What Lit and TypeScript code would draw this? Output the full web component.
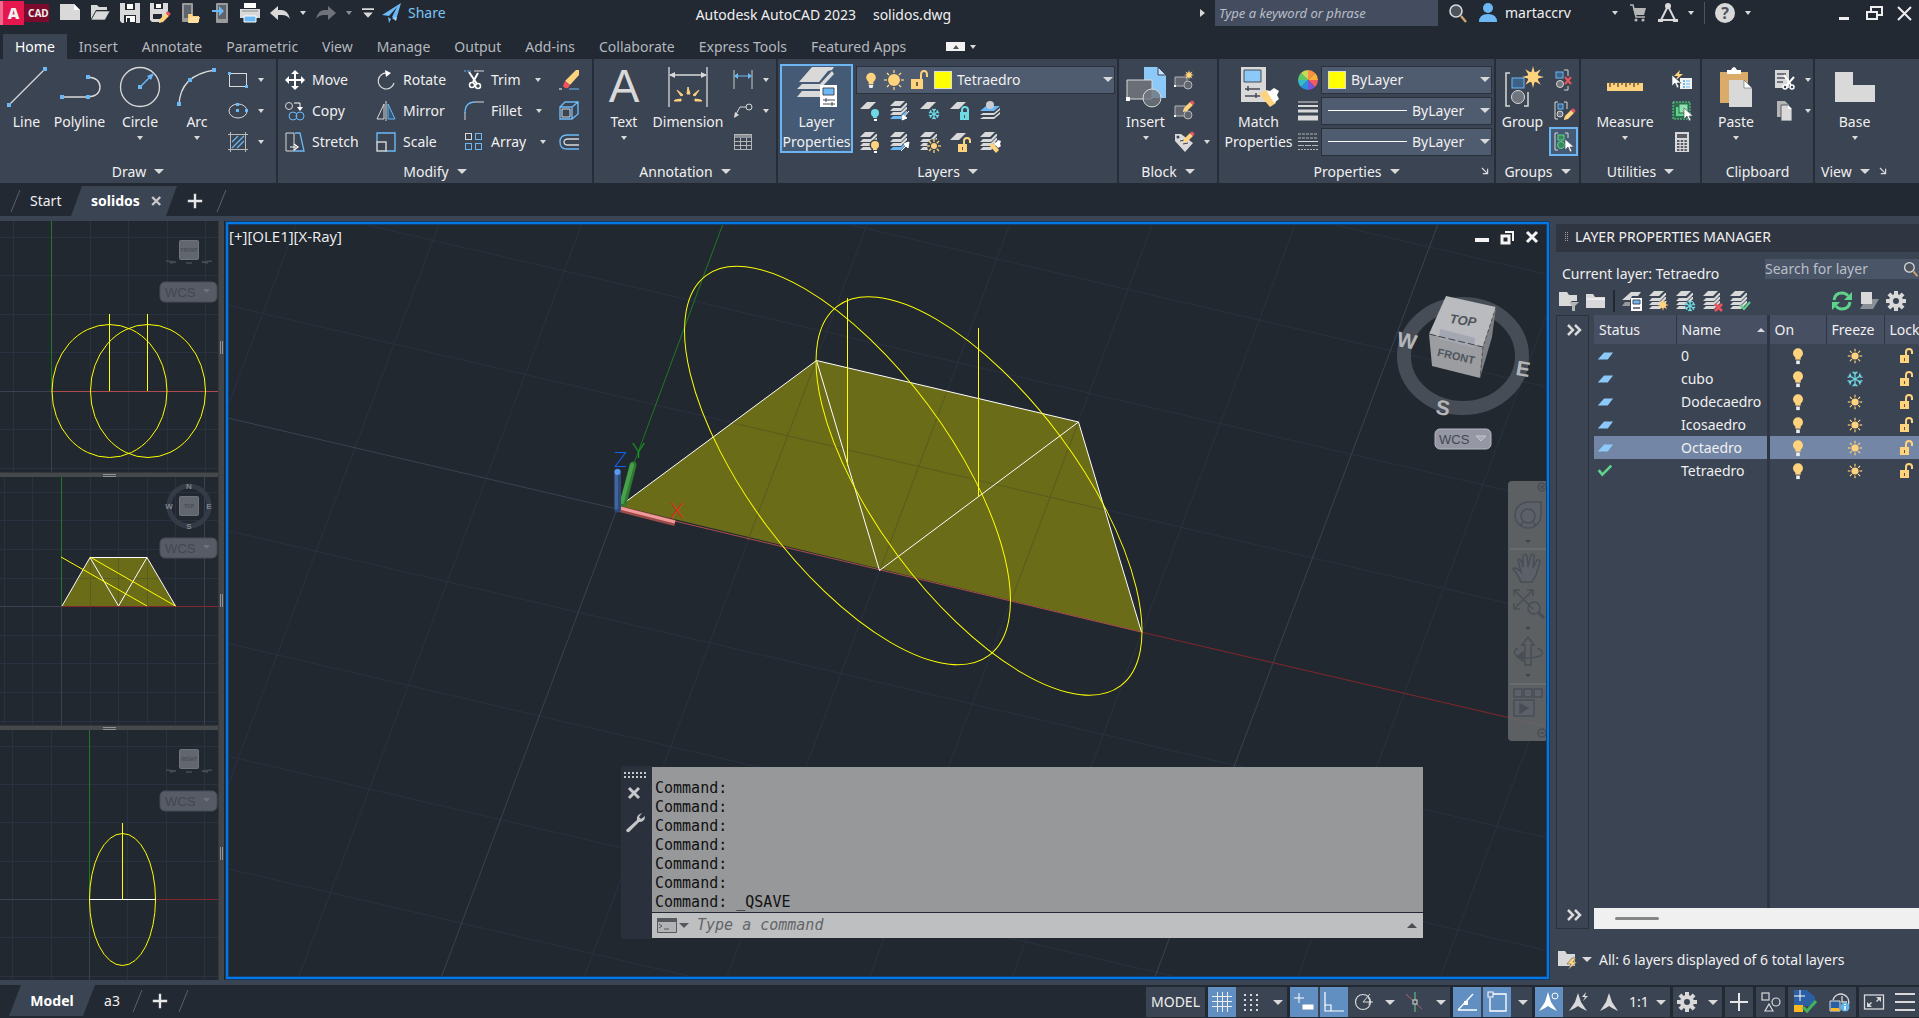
import { LitElement, html, svg, css, nothing, SVGTemplateResult, TemplateResult } from "lit";
import { customElement, state } from "lit/decorators.js";
import { classMap } from "lit/directives/class-map.js";

const L = "#d9d9d9";
const B = "#6cb8f5";
const Y = "#ffd27d";
const T = "#6fd9e4";
const G = "#5fd38a";
const R = "#f0535c";

/* One slanted sheet of a layer stack; x, y is the left end of its lower edge. */
const sheet = (x: number, y: number, w: number, h: number, fill = L) =>
  svg`<path d="M${x} ${y}l${h} ${-h}h${w}l${-h} ${h}z" fill=${fill}/>`;
const stack = (last = L) => svg`
  ${sheet(0, 5, 10, 5)}
  <path d="M0 10l3-3h8l5-5h1v2l-6 6z" fill=${L}/>
  <path d="M0 14l3-3h8l5-5h1v2l-6 6z" fill=${L}/>
  <path d="M0 18l3-3h8l5-5h1v2l-6 6z" fill=${last}/>`;
const bulb = (x: number, y: number, fill = Y) => svg`
  <circle cx=${x} cy=${y} r="4" fill=${fill}/><path d="M${x - 2} ${y + 3}h4v2h-4z" fill=${fill}/>
  <path d="M${x - 1} ${y + 6}h3v2h-3z" fill="#fff"/>`;
const sun = (x: number, y: number, r: number) => svg`
  <circle cx=${x} cy=${y} r=${r} fill=${Y}/>
  ${[0, 45, 90, 135, 180, 225, 270, 315].map(
    (a) => svg`<path d="M0 ${-r - 1}v-3" stroke=${Y} stroke-width="1.3" transform="translate(${x} ${y}) rotate(${a})"/>`
  )}`;
const flake = (x: number, y: number, r: number) => svg`${[0, 60, 120, 180, 240, 300].map(
  (a) => svg`<path d="M0 0v${-r}M${-r / 3} ${-r}l${r / 3} ${r / 3}l${r / 3} ${-r / 3}" fill="none" stroke=${T} stroke-width="1.4" transform="translate(${x} ${y}) rotate(${a})"/>`
)}`;
const lock = (x: number, y: number, fill = Y, open = true) => svg`
  <path d="M${x} ${y}h9v8h-9z" fill=${fill}/><path d="M${x + 4} ${y + 3}h1v3h-1z" fill="#5b5440"/>
  <path d=${open ? `M${x + 6} ${y}v-3q0-3 3-3t3 3v2` : `M${x + 2} ${y}v-2q0-3 3-3t3 3v2`} fill="none" stroke=${fill} stroke-width="2"/>`;
const pencil = (x: number, y: number) => svg`
  <g transform="translate(${x} ${y})"><path d="M0 9l1-3L7 0l3 3-6 6-4 1z" fill=${Y}/><path d="M7 0l1-1q1-1 2 0l1 1q1 1 0 2l-1 1z" fill=${R}/></g>`;
const brush = (x: number, y: number) => svg`
  <g transform="translate(${x} ${y})"><path d="M0 2l4-2 6 7-3 3z" fill=${Y}/><path d="M4-1l3 1 2-3 3 1-1 3 1 2-3 2z" fill="#fff"/></g>`;
const burst = (x: number, y: number, r: number) => svg`
  <g transform="translate(${x} ${y})">${[0, 45, 90, 135].map(
    (a) => svg`<path d="M0 ${-r}L${r / 4} 0L0 ${r}L${-r / 4} 0z" fill=${Y} transform="rotate(${a})"/>`
  )}<circle r=${r / 2} fill=${Y}/></g>`;
const cursor = (x: number, y: number) => svg`
  <path d="M${x} ${y}v11l3-3 2 5 2-1-2-4h4z" fill="#fff" stroke="#3b4453" stroke-width=".6"/>`;
const node = (x: number, y: number) => svg`<rect x=${x - 2} y=${y - 2} width="4" height="4" fill=${B}/>`;

const shapes: Record<string, () => SVGTemplateResult> = {
  /* quick access */
  newFile: () => svg`<path d="M0 1h14l6 6v10H0z" fill=${L}/><path d="M14 1v6h6z" fill="#fff"/>`,
  open: () => svg`<path d="M1 16V2h6l2 2h8v3H6z" fill=${L}/><path d="M6 8h14l-5 9H1z" fill=${L} stroke="#222933" stroke-width=".6"/>`,
  save: () => svg`<path d="M0 0h20v20H2l-2-2z" fill=${L}/><path d="M5 0h10v7H5z" fill="#222933"/><path d="M7 1h6v5H7z" fill="#fff"/><path d="M4 12h12v8H4z" fill="#222933"/><path d="M6 13h9v6H6z" fill="#fff"/><path d="M7 15h3v4H7z" fill="#222933"/>`,
  saveAs: () => svg`<path d="M0 0h18v8l-8 11H2l-2-2z" fill=${L}/><path d="M4 0h9v6H4z" fill="#222933"/><path d="M6 1h5v4H6z" fill="#fff"/><path d="M3 11h9v5H3z" fill="#222933"/>${pencil(9, 10)}`,
  openMobile: () => svg`<rect x="2" y="0" width="11" height="19" rx="1" fill="#9b9b9b"/><path d="M4 2h7v13H4z" fill="#5e646e"/><path d="M8 11h4l1 2h6v6H8z" fill=${Y}/><path d="M10 14h10l-2 6H8z" fill="#ffe0a0"/>`,
  saveMobile: () => svg`<rect x="6" y="0" width="12" height="20" rx="1" fill="#9b9b9b"/><path d="M8 2h8v14H8z" fill="#5e646e"/><path d="M2 7h7V3l5 5-5 5V9H2z" fill=${B}/>`,
  print: () => svg`<path d="M4 0h12v5H4z" fill="#fff"/><path d="M0 6h20v9H0z" fill=${L}/><path d="M2 8h16" stroke="#8a8a8a"/><path d="M4 13h12v6H4z" fill=${B} stroke="#fff"/>`,
  undo: () => svg`<path d="M0 10l8-7v4h3q7 0 9 9-3-4-8-4H8v5z" fill=${L}/>`,
  redo: () => svg`<path d="M20 10l-8-7v4H9q-7 0-9 9 3-4 8-4h4v5z" fill="#6f747c"/>`,
  qatMenu: () => svg`<path d="M0 2h20v3H0zM2 9h16l-8 9z" fill=${L}/>`,
  share: () => svg`<path d="M0 12L19 0l-5 17-4-3 5-10-8 9z" fill=${B}/><path d="M6 14l3 2-2 4z" fill=${B}/><path d="M10 15l4 3 1-4z" fill="#9fd0f8"/>`,
  /* info centre */
  search: () => svg`<circle cx="8" cy="8" r="6" fill="#4d535d" stroke=${L} stroke-width="1.6"/><path d="M13 13l5 6" stroke="#cfa370" stroke-width="2.4"/>`,
  user: () => svg`<circle cx="10" cy="5" r="5" fill=${B}/><path d="M1 19q0-8 9-8t9 8z" fill=${B}/>`,
  cart: () => svg`<path d="M2 2h3l3 12h9" fill="none" stroke="#b5b5b5" stroke-width="1.5"/><path d="M5 5h13l-2 7H7z" fill="#b5b5b5"/><circle cx="8" cy="17" r="1.6" fill="#b5b5b5"/><circle cx="15" cy="17" r="1.6" fill="#b5b5b5"/>`,
  autodesk: () => svg`<path d="M10 3L3 17h14z" fill="none" stroke=${L} stroke-width="2"/><circle cx="10" cy="3" r="3" fill=${L}/><path d="M0 16h5v3H0zM15 16h5v3h-5z" fill=${L}/>`,
  help: () => svg`<circle cx="10" cy="10" r="10" fill=${L}/><text x="10" y="16" text-anchor="middle" font-size="16" font-weight="700" fill="#4d535d">?</text>`,
  winMin: () => svg`<path d="M5 14h10v3H5z" fill="#eee"/>`,
  winMax: () => svg`<path d="M7 8V4h11v8h-4" fill="none" stroke="#eee" stroke-width="2"/><rect x="3" y="9" width="10" height="7" fill="none" stroke="#eee" stroke-width="2"/>`,
  winClose: () => svg`<path d="M4 4l13 13M17 4L4 17" stroke="#eee" stroke-width="2"/>`,
  viewMin: () => svg`<path d="M3 11h14v4H3z" fill="#f4f4f4"/>`,
  viewMax: () => svg`<path d="M8 5h8v9" fill="none" stroke="#f4f4f4" stroke-width="2"/><rect x="5" y="9" width="7" height="7" fill="none" stroke="#f4f4f4" stroke-width="3"/>`,
  viewClose: () => svg`<path d="M5 5l10 10M15 5L5 15" stroke="#f4f4f4" stroke-width="3"/>`,
  /* draw */
  line: () => svg`<path d="M2 38L38 2" stroke=${L} stroke-width="1.3"/>${node(2, 38)}${node(38, 2)}`,
  polyline: () => svg`<path d="M2 30h26q12-1 12-10t-12-10" fill="none" stroke=${L} stroke-width="1.4"/>${node(2, 30)}${node(28, 30)}${node(28, 10)}`,
  circle: () => svg`<circle cx="20" cy="20" r="19.5" fill="none" stroke=${L} stroke-width="1.3"/><path d="M20 20L32 8" stroke=${B} stroke-width="1.4"/><path d="M34 6l-7 3 4 4z" fill=${B}/>${node(20, 20)}`,
  arc: () => svg`<path d="M2 38Q3 8 38 3" fill="none" stroke=${L} stroke-width="1.3"/>${node(2, 37)}${node(13, 13)}${node(37, 3)}`,
  rect: () => svg`<rect x="1.5" y="3.5" width="17" height="13" fill="none" stroke=${L}/><path d="M0 2h3v3H0zM17 15h3v3h-3z" fill=${B}/>`,
  ellipse: () => svg`<ellipse cx="10" cy="10" rx="9" ry="7" fill="none" stroke=${L}/><path d="M8 8h3v3H8zM8 2h3v3H8zM17 8h3v3h-3z" fill=${B}/>`,
  hatch: () => svg`<path d="M0 2.5h20M0 17.5h20M2.5 0v20M17.5 0v20" stroke="#b9b9b9"/><path d="M4 10l6-6M4 16L16 4M9 16l7-7" stroke=${B} stroke-width="1.3"/>`,
  /* modify */
  move: () => svg`<path d="M10 0l4 4h-3v5h5V6l4 4-4 4v-3h-5v5h3l-4 4-4-4h3v-5H4v3l-4-4 4-4v3h5V4H6z" fill="#fff"/>`,
  copy: () => svg`<circle cx="4" cy="5" r="3.5" fill="none" stroke=${L}/><path d="M9 2h6v5" fill="none" stroke="#fff"/><path d="M12 6h6l-3 4z" fill="#fff"/><circle cx="8" cy="15" r="4" fill="none" stroke=${B}/><circle cx="15" cy="15" r="4" fill="none" stroke=${B}/>`,
  stretch: () => svg`<path d="M1 1h8v18H1z" fill="none" stroke=${L}/><path d="M10 1h5l4 18H9" fill="none" stroke=${B} stroke-width="1.3"/><path d="M5 15h6M9 12l4 3-4 3" fill="none" stroke="#fff" stroke-width="1.2"/>`,
  rotate: () => svg`<path d="M11 3a8 8 0 1 0 7 10" fill="none" stroke=${L} stroke-width="1.2"/><path d="M9 0l6 3-5 4z" fill="#fff"/>`,
  mirror: () => svg`<path d="M8 3v15H1z" fill="none" stroke=${L}/><path d="M12 3v15h7z" fill="#32597c" stroke=${B}/><path d="M10 0v20" stroke=${L}/>`,
  scale: () => svg`<path d="M1 10V1h18v18H9" fill="none" stroke=${B} stroke-width="1.4"/><rect x="1" y="10" width="9" height="9" fill="none" stroke=${L} stroke-width="1.4"/>`,
  trim: () => svg`<path d="M0 1h7" stroke=${B} stroke-dasharray="2 1"/><path d="M10 1h10" stroke=${L}/><path d="M5 2l8 12M14 3L9 12" stroke="#fff" stroke-width="2"/><circle cx="8" cy="15" r="2.5" fill="none" stroke="#fff" stroke-width="1.5"/><circle cx="14" cy="16" r="2.5" fill="none" stroke="#fff" stroke-width="1.5"/>`,
  fillet: () => svg`<path d="M1 19v-8" stroke=${L}/><path d="M1 12Q1 1 11 1" fill="none" stroke=${B} stroke-width="1.3"/><path d="M11 1h9" stroke=${L}/>`,
  array: () => svg`<rect x="1.5" y="1.5" width="6" height="6" fill="none" stroke=${L}/><rect x="11.5" y="1.5" width="6" height="6" fill="none" stroke=${B}/><rect x="1.5" y="11.5" width="6" height="6" fill="none" stroke=${B}/><rect x="11.5" y="11.5" width="6" height="6" fill="none" stroke=${B}/>`,
  erase: () => svg`<path d="M20 0v5L11 15l-5-4L17 0z" fill=${Y}/><path d="M6 11l5 4-2 3q-3 1-5-2z" fill=${R}/><path d="M0 19h3" stroke="#fff"/><path d="M10 19h10" stroke=${B}/>`,
  explode: () => svg`<path d="M1 6h12v12H1zM1 6l5-5h13v12l-6 5M13 6l6-5" fill="none" stroke=${B} stroke-width="1.4"/><path d="M3 8h8v8H3z" fill="none" stroke=${L}/>`,
  offset: () => svg`<path d="M20 3H8q-7 0-7 7t7 7h12" fill="none" stroke=${B} stroke-width="1.4"/><path d="M20 7H9q-4 0-4 3t4 3h11" fill="none" stroke=${L} stroke-width="1.3"/>`,
  /* annotation */
  text: () => svg`<text x="20" y="35" text-anchor="middle" font-size="46" font-family="Liberation Sans, Arial, sans-serif" fill=${L}>A</text>`,
  dimension: () => svg`<path d="M1 0v40M39 0v40M2 8h36" stroke=${L} stroke-width="1.3"/><path d="M1 8l6-3v6zM39 8l-6-3v6z" fill=${L}/><path d="M20 20l2 7h-3zM9 23l6 5-2 1zM31 23l-6 5 2 1zM7 33l6-1v2H6zM33 33l-6-1v2h7z" fill=${Y} stroke=${Y}/>`,
  linear: () => svg`<path d="M1 0v19M19 0v19" stroke="#c9c9c9"/><path d="M2 6h16" stroke=${B}/><path d="M1 6l4-3v6zM19 6l-4-3v6z" fill=${B}/>`,
  leader: () => svg`<path d="M2 15L7 6h6" fill="none" stroke=${L}/><path d="M1 17l1-6 4 3z" fill=${L}/><circle cx="16" cy="6" r="3" fill="none" stroke=${L}/>`,
  table: () => svg`<rect x="1.5" y="2.5" width="17" height="15" fill="#3b4453" stroke="#b5b5b5"/><path d="M2 3h16v3H2z" fill="#8d9097"/><path d="M1 9.5h18M1 13.5h18M7.5 6v12M13.5 6v12" stroke="#b5b5b5"/>`,
  /* layers */
  layerProps: () => svg`<path d="M2 15L15 0h22l-2 3-4 1-9 11z" fill=${L}/><path d="M0 22l5-5h18L35 4l2 3-14 15zM0 30l5-6h18v6z" fill=${L}/><path d="M23 18h17v22H23z" fill="#fff"/><path d="M26 21h11v7H26z" fill=${B} stroke="#444a55"/><path d="M26 33h12M26 37h12M29 31v4M35 35v4" stroke="#444a55"/>`,
  lOff: () => svg`${sheet(0, 8, 9, 7)}${bulb(15, 12, T)}`,
  lIsolate: () => svg`${stack(B)}<path d="M19 10l-6 7M12 19l1-5 4 3z" stroke="#fff" fill="#fff"/>`,
  lFreeze: () => svg`${sheet(0, 8, 9, 7)}${flake(14, 13, 5)}`,
  lLock: () => svg`${sheet(0, 8, 9, 7)}${lock(10, 11, T, false)}`,
  lCurrent: () => svg`<path d="M0 10l6-5h14l-6 5z" fill=${B}/><circle cx="10" cy="4" r="4" fill="#c9ccd2"/><path d="M0 14l3-2h11l6-5v2l-6 5zM0 18l3-2h11l6-5v2l-6 5z" fill=${L}/>`,
  lOn: () => svg`${stack()}<circle cx="15" cy="13" r="5.5" fill="#3b4453"/>${bulb(15, 13)}`,
  lUniso: () => svg`${stack(B)}<path d="M11 19l6-6M19 10l-1 6-4-4z" stroke="#fff" fill="#fff"/>`,
  lThaw: () => svg`${stack()}<circle cx="14" cy="14" r="7" fill="#3b4453"/>${sun(14, 14, 3)}`,
  lUnlock: () => svg`${sheet(0, 8, 9, 7)}${lock(8, 12)}`,
  lMatch: () => svg`${stack()}${brush(9, 11)}`,
  bulb: () => svg`<circle cx="10" cy="7" r="6" fill=${Y}/><path d="M7 11h6v4H7z" fill=${Y}/><path d="M7 16h6l-1 4H8z" fill="#eee"/>`,
  sun: () => sun(10, 10, 6),
  unlock: () => svg`<path d="M2 9h12v10H2z" fill=${Y}/><path d="M12 9V5q0-4 3-4t3 4v2" fill="none" stroke=${Y} stroke-width="2"/><path d="M7 12h2v4H7z" fill="#6b6246"/>`,
  /* block */
  insert: () => svg`<path d="M18 0h14l8 8v23H18z" fill="#8cc8f8"/><path d="M32 0v8h8z" fill="#c5e3fb" stroke="#3b4453"/><path d="M1 13h25v19H1z" fill="#696e77" stroke=${L}/><circle cx="26" cy="31" r="9" fill="#70757ecc" stroke=${L}/><path d="M0 30h4v4H0z" fill="#fff"/>`,
  blockNew: () => svg`<path d="M1 7h12v9H1z" fill="#60656f" stroke="#b5b5b5"/><circle cx="14" cy="15" r="4" fill="#60656f" stroke="#b5b5b5"/><path d="M0 15h2v2H0z" fill="#fff"/>${burst(15, 5, 5)}`,
  blockEdit: () => svg`<path d="M1 5h12v10H1z" fill="#60656f" stroke="#b5b5b5"/><circle cx="14" cy="14" r="4" fill="#60656f" stroke="#b5b5b5"/><path d="M0 14h2v2H0z" fill="#fff"/>${pencil(9, 1)}`,
  blockTag: () => svg`<path d="M1 2h6l12 9-8 9L1 9z" fill=${L}/><circle cx="4" cy="5" r="1.5" fill="#3b4453"/><path d="M6 9l5-1M9 12l5-1" stroke="#3b4453"/>${pencil(9, 1)}`,
  /* properties */
  match: () => svg`<path d="M2 0h25v35H2z" fill=${L}/><path d="M5 3h17v12H5z" fill="#8cc8f8" stroke="#444a55"/><path d="M6 22h15M6 29h15M9 19v5M17 26v5" stroke="#444a55" stroke-width="1.5"/><path d="M20 27l7-4 10 13-6 4z" fill=${Y}/><path d="M27 23l4 1 4-3 5 3-2 4 2 4-5 4z" fill="#fff"/>`,
  wheel: () => svg`<g transform="translate(10 10)">${["#ff9040", "#ffb03c", "#f25d64", "#7b55d8", "#2b8fe0", "#38b9c9", "#5fc96a", "#c6d95a"].map(
    (c, i) => svg`<path d="M0 0L0-10A10 10 0 0 1 7.07-7.07z" fill=${c} transform="rotate(${i * 45})"/>`
  )}</g>`,
  weights: () => svg`<path d="M0 1h20" stroke=${L}/><path d="M0 5h20" stroke=${L} stroke-width="2"/><path d="M0 10h20" stroke=${L} stroke-width="3"/><path d="M0 17h20" stroke=${L} stroke-width="5"/>`,
  linetypes: () => svg`<path d="M0 2h20M0 6h20" stroke="#b5b5b5" stroke-dasharray="3 1"/><path d="M0 9.5h20" stroke=${L}/><path d="M0 13.5h20" stroke="#b5b5b5" stroke-dasharray="6 1"/><path d="M0 17.5h20" stroke="#b5b5b5" stroke-dasharray="2 1"/>`,
  /* groups */
  group: () => svg`<path d="M7 6H3v33h4M25 25v14h-4" fill="none" stroke=${L} stroke-width="1.5"/><rect x="9" y="11" width="12" height="10" fill="#3d6187" stroke=${B}/><circle cx="15" cy="30" r="6.5" fill="#70757e" stroke=${L}/>${burst(30, 10, 11)}`,
  ungroup: () => svg`<rect x="2" y="2" width="7" height="6" fill="#3d6187" stroke=${B}/><circle cx="6" cy="14" r="3.5" fill="#70757e" stroke=${L}/><path d="M10 0h4v6M14 16v4h-4" fill="none" stroke=${L}/><path d="M11 7l6 7M17 7l-6 7" stroke=${R} stroke-width="2"/>`,
  groupEdit: () => svg`<path d="M4 1H1v17h3M10 1h3v7" fill="none" stroke=${L}/><rect x="4" y="3" width="5" height="5" fill="#3d6187" stroke=${B}/><circle cx="6" cy="13" r="3" fill="#70757e" stroke=${L}/>${pencil(10, 9)}`,
  groupSel: () => svg`<path d="M4 1H1v17h3M11 1h3v5" fill="none" stroke=${L}/><rect x="4" y="3" width="6" height="5" fill="#38865a" stroke=${G}/><circle cx="7" cy="13" r="3.5" fill="#38865a" stroke=${G}/>${cursor(11, 7)}`,
  /* utilities */
  measure: () => svg`<path d="M2 16h36v8H2z" fill=${Y}/><path d="M5 15v5M9 15v3M13 15v5M17 15v3M21 15v5M25 15v3M29 15v5M33 15v3" stroke="#6b5a38" stroke-width="1.5"/>`,
  quickSel: () => svg`<path d="M8 8h12v11H8z" fill="#f2f2f2"/><path d="M11 11h2M11 14h2M11 17h2" stroke=${B} stroke-width="2"/><path d="M14 11h4M14 14h4M14 17h4" stroke=${B}/><path d="M8 0L2 6h4l-3 5 8-7H7z" fill=${Y}/>${cursor(0, 5)}`,
  selAll: () => svg`<rect x="1" y="1" width="17" height="17" fill="#2e6b4f" stroke=${G} stroke-dasharray="2 1"/><rect x="4" y="6" width="9" height="9" fill=${G}/><rect x="7" y="3" width="9" height="9" fill="#8fe2b0" stroke="#2e6b4f"/>${cursor(12, 7)}`,
  calc: () => svg`<rect x="3" y="0" width="14" height="20" fill=${L}/><path d="M5 2h10v4H5z" fill="#565c66"/><path d="M5 9h10M5 12h10M5 15h10M5 18h10" stroke="#565c66" stroke-width="2" stroke-dasharray="2.5 1.2"/>`,
  /* clipboard */
  paste: () => svg`<path d="M4 5h28v31H4z" fill="#dbab69"/><path d="M11 7V3h4q3-6 6 0h4v4z" fill="#fff"/><path d="M13 13h15l8 8v19H13z" fill=${L}/><path d="M28 13v8h8z" fill="#fff" stroke="#3b4453" stroke-width=".5"/>`,
  cut: () => svg`<path d="M0 0h14v18H0z" fill=${L}/><path d="M2 4h9M2 8h8M2 12h6" stroke="#4d535d" stroke-width="1.5"/><path d="M9 5l7 10M19 7l-8 9" stroke="#fff" stroke-width="2"/><circle cx="10" cy="17" r="2" fill="#3b4453" stroke="#fff" stroke-width="1.5"/><circle cx="17" cy="17" r="2" fill="#3b4453" stroke="#fff" stroke-width="1.5"/>`,
  copyClip: () => svg`<path d="M2 0h8l4 4v12H2z" fill="#b5b5b5"/><path d="M6 4h7l4 4v12H6z" fill=${L} stroke="#3b4453" stroke-width=".8"/><path d="M13 4v4h4z" fill="#fff"/>`,
  base: () => svg`<path d="M0 5h18v13h22v17H0z" fill=${L}/>`,
  launcher: () => svg`<path d="M5 5l6 6M12 6v6H6" fill="none" stroke=${L} stroke-width="1.5"/>`,
  /* palette */
  folderFilter: () => svg`<path d="M0 1h8l2 3h8v6h-6l3 5H0z" fill=${L}/><path d="M10 11h10l-4 4v5h-3v-5z" fill="#b5b5b5"/>`,
  folder: () => svg`<path d="M0 3h7l2 3h10v11H0z" fill=${L}/><path d="M1 8h18" stroke="#fff"/>`,
  states: () => svg`<path d="M0 9L9 1h10l-3 4H10l-2 4z" fill=${L}/><path d="M3 11h5v4H0z" fill="#999"/><path d="M9 7h11v13H9z" fill="#fff"/><path d="M11 9h7v4h-7z" fill=${B} stroke="#444a55"/><path d="M11 17h7" stroke="#444a55" stroke-width="1.5"/>`,
  newLayer: () => svg`${stack()}${burst(14, 14, 6)}`,
  newFrozen: () => svg`${stack()}<circle cx="14" cy="15" r="5" fill="#3b4453"/>${flake(14, 15, 5)}`,
  delLayer: () => svg`${stack()}<path d="M12 13l7 7M19 13l-7 7" stroke=${R} stroke-width="2.5"/>`,
  setCurrent: () => svg`${stack()}<path d="M10 14l4 4 6-7" fill="none" stroke=${G} stroke-width="2"/>`,
  refresh: () => svg`<path d="M2 9q1-7 8-7 4 0 6 3M18 11q-1 7-8 7-4 0-6-3" fill="none" stroke=${G} stroke-width="3"/><path d="M20 1v8h-8zM0 19v-8h8z" fill=${G}/>`,
  overlay: () => svg`<path d="M1 18l6-10h13l-6 10z" fill="#8b8f96"/><path d="M2 1h11v12H2z" fill=${L}/>`,
  gear: () => svg`<g transform="translate(10 10)" fill=${L}>${[0, 45, 90, 135].map(
    (a) => svg`<rect x="-2" y="-10" width="4" height="20" transform="rotate(${a})"/>`
  )}<circle r="7"/></g><circle cx="10" cy="10" r="3" fill="#3b4453"/>`,
  folderBolt: () => svg`<path d="M0 1h7l2 3h8v12H0z" fill=${L}/><path d="M14 8l-5 6h4l-3 6 9-8h-4l3-4z" fill=${Y} stroke="#3b4453" stroke-width=".5"/>`,
  chevrons: () => svg`<path d="M4 5l5 5-5 5M11 5l5 5-5 5" fill="none" stroke=${L} stroke-width="2.5"/>`,
  sheet: () => svg`<path d="M2 14L9 6h10l-6 8z" fill="#8cc8f8"/>`,
  check: () => svg`<path d="M3 9l4 5L17 4" fill="none" stroke=${G} stroke-width="3"/>`,
  rowBulb: () => svg`<circle cx="10" cy="7" r="5.5" fill=${Y}/><path d="M7 11h6v3H7z" fill=${Y}/><path d="M8 15h4v4H8z" fill="#eee"/>`,
  rowSun: () => sun(10, 10, 4),
  rowFlake: () => flake(10, 10, 8),
  rowLock: () => lock(4, 9),
  /* status bar */
  grid: () => svg`<path d="M5.5 0v20M10.5 0v20M15.5 0v20M0 4.5h20M0 9.5h20M0 14.5h20" stroke="#eee"/>`,
  snap: () => svg`<path d="M2 3h16M2 8h16M2 13h16M2 18h16" stroke=${L} stroke-width="2" stroke-dasharray="2 4"/>`,
  dyn: () => svg`<path d="M5 1v10M0 6h10" stroke="#fff"/><rect x="8" y="12" width="12" height="6" fill="#fff" stroke="#6a8db8"/>`,
  ortho: () => svg`<path d="M1 0v19h19M1 13h6v6" fill="none" stroke="#fff" stroke-width="1.2"/>`,
  polar: () => svg`<circle cx="9" cy="10" r="7.5" fill="none" stroke=${L} stroke-width="1.2"/><path d="M9 10h10M9 10l7-8M14 5q3 3 1 8" fill="none" stroke=${L}/>`,
  iso: () => svg`<path d="M1 2l16 15" stroke="#b3626a"/><path d="M10 0v20" stroke=${G}/><rect x="8" y="8" width="4" height="4" fill="#3b4453" stroke=${L}/>`,
  otrack: () => svg`<path d="M1 18h19M1 18L16 2" fill="none" stroke="#fff" stroke-width="1.3"/><path d="M7 9h4v4H7z" fill="#fff"/>`,
  osnap: () => svg`<path d="M6 2h13v17H3V6" fill="none" stroke="#fff" stroke-width="1.3"/><rect x="1" y="0" width="5" height="5" fill="#6a8db8" stroke="#fff"/>`,
  annVis: () => svg`<path d="M9 0l3 10 6 9-6-3-3-2-3 2-6 3 6-9z" fill="#fff"/><circle cx="16" cy="4" r="3" fill="none" stroke="#fff"/>`,
  annAuto: () => svg`<path d="M9 1l3 9 6 9-6-3-3-2-3 2-6 3 6-9z" fill=${L}/><path d="M17 0l-4 5h3l-2 4 5-5h-3z" fill=${L}/>`,
  annScale: () => svg`<path d="M10 1l3 9 6 9-6-3-3-2-3 2-6 3 6-9z" fill=${L}/>`,
  plus: () => svg`<path d="M10 1v18M1 10h18" stroke="#e6e6e6" stroke-width="2"/>`,
  plusBold: () => svg`<path d="M10 1v18M1 10h18" stroke="#e6e6e6" stroke-width="3"/>`,
  shapes: () => svg`<rect x="1" y="1" width="7" height="7" fill="none" stroke=${L} stroke-width="1.2"/><circle cx="15" cy="10" r="4" fill="none" stroke=${L} stroke-width="1.2"/><path d="M8 12l4 7H4z" fill="none" stroke=${L} stroke-width="1.2"/>`,
  trusted: () => svg`<path d="M-1-2h13l8 7v9H-1z" fill="#2a5fa3"/><path d="M-1 13h9v7h-9z" fill="#ffb81f"/><path d="M5-2v11M-1 4h11" stroke="#fff"/><path d="M8 15l4 4 9-10" fill="none" stroke="#43b25a" stroke-width="3"/>`,
  history: () => svg`<path d="M3 8a8 8 0 1 1 14 7M12 4v6h5" fill="none" stroke=${L} stroke-width="1.3"/><path d="M0 9h10v10H0z" fill="#2a5fa3" stroke="#ddd"/><path d="M1 16h8v3H1z" fill="#ffb81f"/><circle cx="15" cy="15" r="4.5" fill="#5fb4ee"/><path d="M15 14v4M15 12v1" stroke="#fff" stroke-width="1.5"/>`,
  fullscreen: () => svg`<rect x="0.5" y="3" width="19" height="14" fill="none" stroke=${L} stroke-width="1.3"/><path d="M17 5v5l-2-2-2 2-1-1 2-2-2-2zM3 15v-5l2 2 2-2 1 1-2 2 2 2z" fill=${L}/>`,
  menu: () => svg`<path d="M0 2h20M0 10h20M0 18h20" stroke=${L} stroke-width="2"/>`,
  prompt: () => svg`<path d="M0.5 2.5h19v14h-19z" fill="#b1b2b4" stroke="#55585c"/><path d="M0 2h20v4H0z" fill="#55585c"/><path d="M2 8l3 2-3 2M7 13h5" fill="none" stroke="#55585c"/>`,
  wrench: () => svg`<path d="M1 17L12 7q-1-5 5-7l-3 4 2 2 4-3q0 6-6 6L4 19q-2 1-3-2z" fill="#c6c7c9"/>`,
  cross: () => svg`<path d="M4 5l10 10M14 5L4 15" stroke="#c6c7c9" stroke-width="3"/>`,
};

const icon = (name: string, size = 20) =>
  html`<svg class="icon" width=${size} height=${size} viewBox=${size === 40 ? "0 0 40 40" : "0 0 20 20"} aria-hidden="true">${shapes[name]()}</svg>`;

const caret = (wide = false) => html`<span class=${wide ? "caret wide" : "caret"}></span>`;

const big = (cls: string, name: string, label: string, drop = false) => html`
  <button class="big ${cls}">${icon(name, 40)}<span class="big-label">${label}</span>${drop ? caret() : nothing}</button>`;

const mini = (name: string, title: string, drop = false) => html`
  <button class="mini" aria-label=${title}>${icon(name)}${drop ? caret() : nothing}</button>`;

const tool = (name: string, label: string, drop = false) => html`
  <button class="tool">${icon(name)}<span>${label}</span>${drop ? caret() : nothing}</button>`;

const panel = (cls: string, label: string, body: TemplateResult, drop = true, launcher = false) => html`
  <section class="panel ${cls}">
    <div class="panel-body">${body}</div>
    <div class="panel-foot">
      <button class="foot-btn">${label}${drop ? caret(true) : nothing}</button>
      ${launcher ? html`<button class="launch" aria-label="${label} settings">${icon("launcher", 16)}</button>` : nothing}
    </div>
  </section>`;

const status = (name: string, title: string, on = false) => html`
  <button class=${classMap({ sb: true, on })} aria-label=${title} aria-pressed=${on ? "true" : "false"}>${icon(name)}</button>`;
const statusDrop = (title: string) => html`<button class="sb drop" aria-label=${title}>${caret(true)}</button>`;

const vlines = (xs: number[], h = 260) => xs.map((x) => svg`<path d="M${x} 0v${h}" class="minor"/>`);
const hlines = (ys: number[], w = 218) => ys.map((y) => svg`<path d="M0 ${y}h${w}" class="minor"/>`);

interface Layer {
  name: string;
  frozen?: boolean;
  current?: boolean;
}

@customElement("app-root")
export class AppRoot extends LitElement {
  static styles = css`
    :host {
      --dark: #222933;
      --panel: #3b4453;
      --field: #4f5b6e;
      --canvas: #212830;
      --text: #f0f0f0;
      display: flex;
      flex-direction: column;
      height: 100vh;
      overflow: hidden;
      background: var(--dark);
      color: var(--text);
      font: 14px/20px "Noto Sans", "Open Sans", sans-serif;
    }
    *, *::before, *::after { box-sizing: border-box; }
    button, input, select { font: inherit; color: inherit; background: none; border: 0; padding: 0; margin: 0; }
    button { white-space: nowrap; }
    .icon { display: block; flex: none; overflow: visible; }
    .caret {
      flex: none; width: 0; height: 0;
      border: 3px solid transparent; border-top: 4px solid #d9d9d9; border-bottom: 0;
    }
    .caret.wide { border-width: 5px 5px 0; }

    /* title bar */
    .title-bar { display: flex; align-items: center; height: 34px; padding-bottom: 8px; flex: none; }
    .quick { display: flex; align-items: center; gap: 10px; flex: 23 1 0; }
    .logo { display: flex; align-items: center; width: 49px; height: 18px; background: #7c0a2c; font-weight: 700; gap: 4px; margin-right: 1px; }
    .logo b { display: grid; place-items: center; width: 24px; height: 24px; background: #e4184f; border-left: 3px solid #f06a8f; font-size: 16px; }
    .logo span { font-size: 10px; }
    .quick .dim { border-top-color: #8a8f97; }
    .share { display: flex; align-items: center; gap: 6px; color: #7cc4f7; margin-left: -2px; }
    .app-title { display: flex; gap: 17px; padding-top: 3px; }
    .info { display: flex; align-items: center; justify-content: flex-end; flex: 32 1 0; gap: 10px; }
    .info-search { width: 223px; height: 26px; background: #444d60; padding: 0 4px; font-style: italic; font-size: 13px; }
    .info-search::placeholder, .layer-search::placeholder { color: #b9bec7; opacity: 1; }
    .play { border: 4px solid transparent; border-left: 5px solid #d9d9d9; border-right: 0; }
    .account { display: flex; align-items: center; gap: 7px; width: 140px; }
    .account .caret { margin-left: auto; }
    .rule { width: 1px; height: 22px; background: #4d535d; }
    .win { display: flex; margin-left: 68px; }
    .win button { display: grid; place-items: center; width: 30px; height: 26px; }

    /* ribbon tabs */
    .tabs { display: flex; height: 25px; padding-left: 3px; flex: none; align-items: stretch; }
    .tab { padding: 0 12px; color: #b4b8bf; }
    .tab.active { background: var(--panel); color: #fff; }
    .tab-box { display: flex; align-items: center; gap: 5px; margin-left: 28px; }
    .tab-box i { display: grid; place-items: center; width: 19px; height: 9px; background: #f2f2f2; }
    .tab-box i::before { content: ""; border: 3px solid transparent; border-bottom: 4px solid #555; border-top: 0; }

    /* ribbon */
    .ribbon { display: flex; height: 124px; background: var(--panel); flex: none; }
    .panel { display: flex; flex-direction: column; border-right: 2px solid #262d38; flex: none; }
    .panel-body { display: flex; flex: 1; padding-top: 5px; }
    .panel-foot { display: flex; align-items: center; justify-content: center; height: 23px; position: relative; }
    .foot-btn { display: flex; align-items: center; gap: 8px; }
    .launch { position: absolute; right: 0; top: 4px; }
    .draw { width: 278px; } .modify { width: 316px; } .annotation { width: 184px; }
    .layers { width: 341px; } .block { width: 100px; } .props { width: 277px; }
    .groups { width: 85px; } .utils { width: 121px; } .clip { width: 113px; }
    .viewp { flex: 1; border-right: 0; }
    .viewp .panel-foot { justify-content: flex-start; padding-left: 6px; gap: 6px; }
    .viewp .launch { position: static; }
    .big { display: flex; flex-direction: column; align-items: center; height: 91px; padding-top: 3px; gap: 5px; flex: none; }
    .big-label { white-space: pre-line; text-align: center; }
    .w46 { width: 46px; } .w53 { width: 53px; } .w60 { width: 60px; } .w68 { width: 68px; } .w79 { width: 79px; } .w88 { width: 88px; }
    .big .caret { margin-top: -1px; }
    .layer-btn { width: 73px; margin: 0 3px 0 2px; height: 89px; background: #455b75; box-shadow: inset 0 0 0 2px #6cb5f2; }
    .col { display: grid; grid-template-rows: repeat(3, 31px); align-content: start; }
    .mini, .tool { display: flex; align-items: center; gap: 10px; }
    .tool { gap: 7px; }
    .tool .caret { margin-left: 7px; }
    .draw .col { padding-left: 8px; }
    .modify .panel-body { padding-left: 7px; display: grid; grid-template-columns: 91px 88px 95px 30px; align-content: start; }
    .annotation .col { padding-left: 11px; }
    .clip .col { padding-left: 5px; }
    .layer-side { display: grid; grid-template-rows: repeat(3, 31px); flex: 1; padding-right: 2px; }
    .layer-row { display: flex; gap: 10px; padding-left: 4px; }
    .field {
      display: flex; align-items: center; position: relative; align-self: center; height: 28px;
      background: var(--field); border: 1px solid #2a313d; padding-left: 6px; gap: 5px;
    }
    .field select { appearance: none; flex: 1; min-width: 0; height: 26px; outline: none; }
    .field .caret { position: absolute; right: 1px; pointer-events: none; }
    .swatch { width: 18px; height: 18px; background: #ff0; border: 1px solid #ddd; flex: none; }
    .stroke { width: 79px; height: 1px; background: #fff; flex: none; }
    .prop-rows { display: grid; grid-template-rows: repeat(3, 31px); grid-template-columns: 20px 1fr; column-gap: 3px; align-items: center; flex: 1; align-content: start; padding-right: 2px; }
    .block .col { padding-left: 2px; }
    .groups .col { justify-items: center; width: 28px; }
    .groups .pressed { padding: 3px; margin: 1px 0; justify-content: center; width: 29px; background: #455b75; box-shadow: inset 0 0 0 2px #6cb5f2; }
    .utils .col { padding-left: 3px; }

    /* document tabs */
    .docs { display: flex; height: 33px; padding-top: 3px; align-items: stretch; flex: none; }
    .slash { width: 30px; display: grid; place-items: center; }
    .slash.near { width: 16px; }
    .slash::before { content: ""; width: 1px; height: 22px; background: #5b626e; transform: skewX(-22deg); }
    .doc { display: flex; align-items: center; gap: 9px; }
    .doc.start { width: 41px; }
    .doc.open {
      background: var(--panel); width: 106px; padding-left: 20px; font-weight: 700; color: #fff;
      clip-path: polygon(11px 0, 100% 0, calc(100% - 11px) 100%, 0 100%);
    }
    .doc-x, .doc-add { display: grid; place-items: center; }
    .doc-add { width: 36px; }

    /* work area */
    .work { display: flex; flex: 1; min-height: 0; background: var(--panel); padding: 5px 0; }
    .left { display: grid; grid-template-rows: 251fr 5px 248fr 5px 250fr; width: 218px; flex: none; }
    .view { position: relative; background: var(--canvas); overflow: hidden; }
    .scene { display: block; position: absolute; inset: 0; width: 100%; height: 100%; }
    .bar-h { background: #46494b; border-top: 1px solid #33373b; display: grid; place-items: center; }
    .bar-h::before { content: ""; width: 13px; height: 3px; border: 1px solid #8f9294; border-width: 1px 0; }
    .bar-v { width: 7px; background: #434648; border-left: 1px solid #33373b; border-right: 1px solid #222; flex: none; display: grid; justify-items: center; align-items: center; grid-template-rows: repeat(3, 1fr); }
    .bar-v i { width: 3px; height: 13px; border: 1px solid #8f9294; border-width: 0 1px; }
    .minor { stroke: #2a3140; stroke-width: 1; fill: none; }
    .major { stroke: #3a4252; stroke-width: 1; fill: none; }
    .yellow { stroke: #ff0; fill: none; stroke-width: 1; }
    .white { stroke: #fff; fill: none; stroke-width: 1; }
    .solid { fill: #6a6c18; }
    .green { stroke: #1d7a22; fill: none; }
    .red { stroke: #83282c; fill: none; }
    .red-hi { stroke: #ad4d4d; fill: none; }
    .mini-cube { position: absolute; right: 0; top: 0; width: 60px; height: 84px; }
    .mini-wcs { font: 13px "Liberation Sans", Arial, sans-serif; fill: #42474f; }
    .small-caps { font: 700 8px "Liberation Sans", Arial, sans-serif; fill: #7e838b; text-anchor: middle; }
    .face { font: 700 5px "Liberation Sans", Arial, sans-serif; fill: #484d55; text-anchor: middle; }
    .main { flex: 1; min-width: 0; }
    .main::after {
      content: ""; position: absolute; inset: 0; pointer-events: none;
      box-shadow: inset 0 0 0 1px #143a66, inset 0 0 0 3px #0078e6, inset 0 0 0 4px #173f6d;
    }
    .view-label { position: absolute; left: 4px; top: 5px; font: 15px/20px "Open Sans", "Noto Sans", sans-serif; }
    .view-ctl { position: absolute; right: 8px; top: 6px; display: flex; gap: 5px; }
    .axis-name { font: 300 22px Lato, sans-serif; }
    .big-cube { position: absolute; right: 16px; top: 70px; width: 140px; height: 165px; }
    .compass { font: 700 21px "Liberation Sans", Arial, sans-serif; fill: #b4b6b9; text-anchor: middle; }
    .cube-name { font: italic 700 13px "Liberation Sans", Arial, sans-serif; fill: #4e545c; text-anchor: middle; }
    .cube-name.low { font: 700 11px "Liberation Sans", Arial, sans-serif; }
    .nav { position: absolute; right: 2px; top: 260px; width: 40px; height: 260px; background: #65696bdd; border-radius: 4px; }
    .nav svg { display: block; }

    .cmd { position: absolute; left: 396px; bottom: 41px; width: calc(100% - 523px); display: flex; }
    .cmd-side { width: 31px; background: #2a303c; border-radius: 3px 0 0 3px; display: flex; flex-direction: column; align-items: center; gap: 10px; padding: 6px 3px 0 0; }
    .grip { width: 22px; height: 6px; margin-bottom: -5px; background: repeating-linear-gradient(90deg, #c6c7c9 0 2px, transparent 2px 4px) 0 0 / 22px 2px no-repeat, repeating-linear-gradient(90deg, #c6c7c9 0 2px, transparent 2px 4px) 0 4px / 22px 2px no-repeat; }
    .cmd-main { flex: 1; font: 15px/19px "DejaVu Sans Mono", "Liberation Mono", monospace; color: #111; margin: 1px 0; }
    .cmd-log { margin: 0; padding: 12px 3px 0; background: #979899; font: inherit; border-bottom: 1px solid #222933; }
    .cmd-line { display: flex; align-items: center; height: 25px; background: #bebfc0; padding: 0 6px 0 5px; gap: 2px; }
    .cmd-line input { flex: 1; font: italic 15px/19px "DejaVu Sans Mono", "Liberation Mono", monospace; outline: none; margin-left: 6px; }
    .cmd-line input::placeholder { color: #626569; opacity: 1; }
    .cmd-line .caret { border-top-color: #55585c; }
    .up { border: 5px solid transparent; border-bottom: 5px solid #4a4d51; border-top: 0; }

    /* layer palette */
    .palette { width: 369px; padding: 3px 0 0 6px; flex: none; display: flex; flex-direction: column; }
    .pal-title { display: flex; align-items: center; gap: 7px; height: 28px; margin: 0; background: #2f3541; padding: 0 0 3px 9px; font: inherit; }
    .pal-title i { width: 3px; height: 9px; border: 1px dotted #9a9ea6; border-width: 0 1px; }
    .pal-head { display: flex; justify-content: space-between; padding: 7px 0 0 6px; height: 34px; }
    .pal-head span { padding-top: 5px; }
    .pal-search { display: flex; width: 154px; height: 20px; background: #4a5568; align-items: center; }
    .layer-search { flex: 1; min-width: 0; height: 20px; outline: none; }
    .pal-tools { display: flex; align-items: center; gap: 7px; height: 29px; padding: 0 13px 0 3px; }
    .pal-tools .rule { background: #222933; width: 2px; }
    .pal-tools .push { margin-left: auto; }
    .pal-grid { display: flex; flex: 1; min-height: 0; }
    .rail { width: 33px; border: 1px solid #2b323d; display: flex; flex-direction: column; justify-content: space-between; align-items: center; padding: 4px 0 3px 3px; margin-right: 5px; }
    .list { flex: 1; min-width: 0; display: flex; flex-direction: column; }
    .grid-box { flex: 1; min-height: 0; overflow: hidden; }
    table { width: 100%; height: 100%; border-collapse: collapse; table-layout: fixed; }
    th { height: 29px; background: #474f63; text-align: left; font-weight: 400; padding: 0 0 0 5px; border-right: 1px solid #2f3643; white-space: nowrap; overflow: hidden; }
    th:last-child { border-right: 0; }
    .c-status { width: 82px; } .c-name { width: 92px; } .c-on { width: 58px; } .c-freeze { width: 58px; }
    .split { border-left: 3px solid #2f3643; }
    td { padding: 0; height: 23px; }
    td.name { padding-left: 5px; white-space: nowrap; }
    tbody tr td .icon { margin: 0 auto; }
    tbody tr td.state .icon { margin: 0 0 0 2px; }
    tbody tr td.end .icon { margin: 0 0 0 12px; }
    tr.sel td { background: #7386a6; }
    tr.fill td { height: auto; }
    .th-in { display: flex; align-items: center; justify-content: space-between; padding-right: 2px; }
    .th-in .up { border-width: 0 4px 4px; border-bottom-color: #d9d9d9; }
    .hscroll { height: 21px; background: #f0f0f0; padding: 9px 0 0 21px; }
    .hscroll i { display: block; width: 44px; height: 3px; border-radius: 2px; background: #868686; }
    .pal-foot { display: flex; align-items: center; height: 51px; padding: 10px 0 0 2px; gap: 4px; }
    .pal-foot span:last-child { margin-left: 3px; }

    /* status bar */
    .status { display: flex; align-items: stretch; height: 33px; flex: none; }
    .models { display: flex; align-items: stretch; padding-left: 9px; padding-bottom: 2px; }
    .model { width: 86px; background: var(--panel); font-weight: 700; color: #fff; clip-path: polygon(12px 0, 100% 0, calc(100% - 12px) 100%, 0 100%); }
    .sheet-tab { width: 34px; }
    .sheet-add { display: grid; place-items: center; width: 30px; }
    .tray { display: flex; gap: 3px; margin-left: auto; padding: 2px 0 1px; }
    .grp { display: flex; background: var(--panel); gap: 2px; }
    .sb { display: grid; place-items: center; width: 28px; }
    .sb.on { background: #628fc1; }
    .sb.drop { width: 19px; }
    .mdl { width: 59px; }
    .ratio { width: 24px; padding-left: 4px; }
    .wide-sb .sb { width: 33px; }
    .mid-sb .sb { width: 29px; }
  `;

  @state() private selected = "Octaedro";

  private layers: Layer[] = [
    { name: "0" },
    { name: "cubo", frozen: true },
    { name: "Dodecaedro" },
    { name: "Icosaedro" },
    { name: "Octaedro" },
    { name: "Tetraedro", current: true },
  ];

  private titleBar() {
    return html`<header class="title-bar">
      <div class="quick">
        <div class="logo"><b>A</b><span>CAD</span></div>
        ${["newFile", "open", "save", "saveAs", "openMobile", "saveMobile", "print"].map(
          (n) => html`<button aria-label=${n}>${icon(n)}</button>`
        )}
        <button aria-label="Undo">${icon("undo")}</button>${caret()}
        <button aria-label="Redo">${icon("redo")}</button><span class="caret dim"></span>
        <button aria-label="Customize toolbar">${icon("qatMenu", 12)}</button>
        <button class="share">${icon("share")}Share</button>
      </div>
      <div class="app-title"><span>Autodesk AutoCAD 2023</span><span>solidos.dwg</span></div>
      <div class="info">
        <span class="play"></span>
        <input class="info-search" type="search" aria-label="Search help" placeholder="Type a keyword or phrase" />
        <button aria-label="Search">${icon("search")}</button>
        <button class="account">${icon("user")}<span>martaccrv</span>${caret()}</button>
        <button aria-label="App store">${icon("cart")}</button>
        <button aria-label="Autodesk apps">${icon("autodesk")}</button>${caret()}
        <span class="rule"></span>
        <button aria-label="Help">${icon("help")}</button>${caret()}
        <div class="win">
          <button aria-label="Minimize">${icon("winMin")}</button>
          <button aria-label="Restore">${icon("winMax")}</button>
          <button aria-label="Close">${icon("winClose")}</button>
        </div>
      </div>
    </header>`;
  }

  private tabs() {
    const names = ["Home", "Insert", "Annotate", "Parametric", "View", "Manage", "Output", "Add-ins", "Collaborate", "Express Tools", "Featured Apps"];
    return html`<nav class="tabs">
      ${names.map((n, i) => html`<button class=${classMap({ tab: true, active: i === 0 })}>${n}</button>`)}
      <button class="tab-box" aria-label="Minimize ribbon"><i></i>${caret()}</button>
    </nav>`;
  }

  private ribbon() {
    return html`<div class="ribbon">
      ${panel("draw", "Draw", html`
        ${big("w53", "line", "Line")}${big("w53", "polyline", "Polyline")}${big("w68", "circle", "Circle", true)}${big("w46", "arc", "Arc", true)}
        <div class="col">${mini("rect", "Rectangle", true)}${mini("ellipse", "Ellipse", true)}${mini("hatch", "Hatch", true)}</div>`)}
      ${panel("modify", "Modify", html`
        <div class="col">${tool("move", "Move")}${tool("copy", "Copy")}${tool("stretch", "Stretch")}</div>
        <div class="col">${tool("rotate", "Rotate")}${tool("mirror", "Mirror")}${tool("scale", "Scale")}</div>
        <div class="col">${tool("trim", "Trim", true)}${tool("fillet", "Fillet", true)}${tool("array", "Array", true)}</div>
        <div class="col">${mini("erase", "Erase")}${mini("explode", "Explode")}${mini("offset", "Offset")}</div>`)}
      ${panel("annotation", "Annotation", html`
        ${big("w60", "text", "Text", true)}${big("w68", "dimension", "Dimension")}
        <div class="col">${mini("linear", "Linear", true)}${mini("leader", "Leader", true)}${mini("table", "Table")}</div>`)}
      ${panel("layers", "Layers", html`
        ${big("layer-btn", "layerProps", "Layer\nProperties")}
        <div class="layer-side">
          <div class="field">
            ${icon("bulb", 16)}${icon("sun")}${icon("unlock")}<span class="swatch"></span>
            <select aria-label="Current layer">
              ${[...this.layers].reverse().map((l) => html`<option>${l.name}</option>`)}
            </select>${caret(true)}
          </div>
          <div class="layer-row">
            ${mini("lOff", "Off")}${mini("lIsolate", "Isolate")}${mini("lFreeze", "Freeze")}${mini("lLock", "Lock")}${mini("lCurrent", "Make current")}
          </div>
          <div class="layer-row">
            ${mini("lOn", "Turn all on")}${mini("lUniso", "Unisolate")}${mini("lThaw", "Thaw all")}${mini("lUnlock", "Unlock")}${mini("lMatch", "Match layer")}
          </div>
        </div>`)}
      ${panel("block", "Block", html`
        ${big("w53", "insert", "Insert", true)}
        <div class="col">${mini("blockNew", "Create")}${mini("blockEdit", "Edit")}${mini("blockTag", "Edit attributes", true)}</div>`)}
      ${panel("props", "Properties", html`
        ${big("w79", "match", "Match\nProperties")}
        <div class="prop-rows">
          ${icon("wheel")}
          <div class="field"><span class="swatch"></span><select aria-label="Object color"><option>ByLayer</option></select>${caret(true)}</div>
          ${icon("weights")}
          <div class="field"><span class="stroke"></span><select aria-label="Lineweight"><option>ByLayer</option></select>${caret(true)}</div>
          ${icon("linetypes")}
          <div class="field"><span class="stroke"></span><select aria-label="Linetype"><option>ByLayer</option></select>${caret(true)}</div>
        </div>`, true, true)}
      ${panel("groups", "Groups", html`
        ${big("w53", "group", "Group")}
        <div class="col">${mini("ungroup", "Ungroup")}${mini("groupEdit", "Group edit")}
          <button class="mini pressed" aria-label="Group selection">${icon("groupSel")}</button></div>`)}
      ${panel("utils", "Utilities", html`
        ${big("w88", "measure", "Measure", true)}
        <div class="col">${mini("quickSel", "Quick select")}${mini("selAll", "Select all")}${mini("calc", "Calculator")}</div>`)}
      ${panel("clip", "Clipboard", html`
        ${big("w68", "paste", "Paste", true)}
        <div class="col">${mini("cut", "Cut", true)}${mini("copyClip", "Copy", true)}</div>`, false)}
      ${panel("viewp", "View", html`${big("w79", "base", "Base", true)}`, true, true)}
    </div>`;
  }

  private miniCube(face: string, ring: boolean) {
    return html`<svg class="mini-cube" role="img" aria-label="View cube ${face}">
      ${ring
        ? svg`<circle cx="31" cy="29" r="20" fill="none" stroke="#343b46" stroke-width="5"/>
          <text x="31" y="12" class="small-caps">N</text><text x="31" y="52" class="small-caps">S</text>
          <text x="11" y="32" class="small-caps">W</text><text x="51" y="32" class="small-caps">E</text>`
        : svg`<path d="M8 40l10 1-6 1M54 40l-10 1 6 1M28 42h6" stroke="#464c56" stroke-width="1.5" fill="none"/>`}
      <rect x="21.5" y="19.5" width="19" height="19" rx="1" fill="#62676f" stroke="#6f747b"/>
      <text x="31" y="31" class="face">${face}</text>
      <rect x="2" y="61" width="57" height="20" rx="5" fill="#565b65" stroke="#484d57"/>
      <text x="7" y="76" class="mini-wcs">WCS</text><path d="M45 68h7l-3.5 4z" fill="#6d727b"/>
    </svg>`;
  }

  private leftViews() {
    return html`<div class="left">
      <div class="view">
        <svg class="scene">
          ${vlines([13.5, 90.5, 128.5, 167.5, 205.5])}${hlines([16.5, 54.5, 93.5, 131.5, 208.5, 247.5])}
          <path d="M0 170.5h51M51.5 170v90" class="major"/>
          <path d="M51.5 0v170" class="green"/><path d="M51 170.5h167" class="red-hi"/>
          <ellipse cx="109.5" cy="170" rx="57.5" ry="66.5" class="yellow"/>
          <ellipse cx="148" cy="170" rx="57.5" ry="66.5" class="yellow"/>
          <path d="M109.5 93v77M147.5 93v77" class="yellow"/>
        </svg>
        ${this.miniCube("FRONT", false)}
      </div>
      <div class="bar-h"></div>
      <div class="view">
        <svg class="scene">
          ${vlines([4.5, 32.5, 90.5, 118.5, 147.5, 175.5])}${hlines([15.5, 43.5, 72.5, 101.5, 158.5, 186.5, 215.5, 244.5])}
          <path d="M0 129.5h61M61.5 129v130M204.5 0v260" class="major"/>
          <path d="M62 129L90 80.5H147L175.5 129z" class="solid"/>
          <path d="M90.5 81v48M118.5 81v48M147.5 81v48M78 101.5h82" stroke="#5b5c20"/>
          <path d="M61.5 0v129" class="green"/><path d="M61 129.5h157" class="red"/>
          <path d="M62 129L90 80.5H147L175.5 129M90 80.5L118.5 129L147 80.5" class="white"/>
          <path d="M61 80L147 129M90 80L175.5 129" class="yellow"/>
        </svg>
        ${this.miniCube("TOP", true)}
      </div>
      <div class="bar-h"></div>
      <div class="view">
        <svg class="scene">
          ${vlines([12.5, 51.5, 127.5, 166.5, 204.5])}${hlines([16.5, 54.5, 92.5, 131.5, 207.5, 246.5])}
          <path d="M0 169.5h89M89.5 170v90" class="major"/>
          <path d="M89.5 0v169" class="green"/><path d="M155 169.5h63" class="red"/>
          <ellipse cx="122.5" cy="169.5" rx="33" ry="66" class="yellow"/>
          <path d="M122.5 93v76" class="yellow"/><path d="M89 169.5h67" class="white"/>
        </svg>
        ${this.miniCube("RIGHT", false)}
      </div>
    </div>
    <div class="bar-v"><i></i><i></i><i></i></div>`;
  }

  /* Ground grid: one family follows the X axis, the other the Y axis. */
  private groundGrid() {
    const along = [-6, -5, -4, -3, -2, -1, 1, 2, 3, 4];
    const across = [-4, -3, -2, -1, 1, 2, 3, 4, 5, 6, 7, 8];
    return svg`
      ${along.map((k) => svg`<path d="M-10 ${194 + 112.7 * k}l1400 326" class=${k === -5 ? "major" : "minor"}/>`)}
      ${across.map((k) => svg`<path d="M${501 + 142.7 * k} -1l-300 798" class=${k === 5 ? "major" : "minor"}/>`)}
      <path d="M-10 194L392 288L216 757" class="major"/>`;
  }

  private mainView() {
    return html`<div class="view main">
      <svg class="scene">
        ${this.groundGrid()}
        <path d="M392 288L499 0" class="green"/>
        <path d="M395 285L591.5 139.5L853.5 201L916.5 411z" class="solid"/>
        <path d="M508 202L880 289M591 140L523 319M722 170L655 349M853 202L786 380" stroke="#5a5b1e" fill="none"/>
        <path d="M916 411L1324 506" class="red"/><path d="M395 287L916 411" class="red-hi"/>
        <path d="M395 285L591.5 139.5L853.5 201L916.5 411M591.5 139.5L654.5 349.5L853.5 201" class="white"/>
        <ellipse cx="622.5" cy="244.5" rx="236.8" ry="100.8" transform="rotate(53.3 622.5 244.5)" class="yellow"/>
        <ellipse cx="754" cy="275" rx="236.8" ry="100.8" transform="rotate(53.3 754 275)" class="yellow"/>
        <path d="M622.5 77v168M753.5 107v169" class="yellow"/>
        <path d="M398 283L408 244" stroke="#2f7a33" stroke-width="7" stroke-linecap="round"/>
        <path d="M397 281L407 244" stroke="#47a04a" stroke-width="4" stroke-linecap="round"/>
        <path d="M395 288L450 302" stroke="#9c4a4a" stroke-width="6"/>
        <path d="M395 287L450 301" stroke="#f09a9a" stroke-width="3"/>
        <path d="M392.5 251v37" stroke="#2d4a78" stroke-width="7" stroke-linecap="round"/>
        <path d="M391.5 252v35" stroke="#42659c" stroke-width="3" stroke-linecap="round"/>
        <circle cx="392.5" cy="251" r="3" fill="#5a9bf0"/>
        <text x="389" y="246" class="axis-name" fill="#0f62f0">Z</text>
        <text x="407" y="237" class="axis-name" fill="#17a01c">Y</text>
        <text x="445" y="297" class="axis-name" fill="#f02020">X</text>
      </svg>
      <span class="view-label">[+][OLE1][X-Ray]</span>
      <div class="view-ctl">
        <button aria-label="Minimize viewport">${icon("viewMin")}</button>
        <button aria-label="Restore viewport">${icon("viewMax")}</button>
        <button aria-label="Close viewport">${icon("viewClose")}</button>
      </div>
      <svg class="big-cube" role="img" aria-label="View cube">
        <ellipse cx="69" cy="65" rx="59" ry="52" fill="none" stroke="#474d56" stroke-width="14"/>
        <path d="M52 5L102 16L89 56L35 43z" fill="#b9bbbe"/>
        <path d="M35 43L89 56L86 87L38 75z" fill="#9b9da1"/>
        <path d="M102 16L89 56L86 87L98 46z" fill="#7d8085"/>
        <path d="M46 38l35 9-1 10-35-9z" fill="#a2a7b2"/>
        <path d="M35 43L89 56" stroke="#444" stroke-dasharray="7 3"/><path d="M102 16L89 56L86 87" stroke="#555" stroke-dasharray="3 3" fill="none"/>
        <text x="69" y="34" class="cube-name" transform="rotate(8 69 30)">TOP</text>
        <text x="62" y="69" class="cube-name low" transform="rotate(13 62 66)">FRONT</text>
        <text x="13" y="57" class="compass" transform="rotate(12 13 50)">W</text>
        <text x="129" y="85" class="compass" transform="rotate(10 129 78)">E</text>
        <text x="49" y="124" class="compass" transform="rotate(8 49 117)">S</text>
        <rect x="41" y="138" width="56" height="20" rx="5" fill="#9598a4" stroke="#b4b6bf"/>
        <text x="45" y="153" class="mini-wcs">WCS</text><path d="M82 145h10l-5 5z" fill="#a8abb5" stroke="#c3c5cc"/>
      </svg>
      <div class="nav">
        <svg width="40" height="260" fill="none" stroke="#484e56" stroke-width="1.5" role="img" aria-label="Navigation bar">
          <path d="M2 68h36M2 203h36" stroke="#74787a" stroke-width="1"/>
          <circle cx="34" cy="6" r="4"/><path d="M32 4l4 4M36 4l-4 4"/>
          <path d="M20 21h13v14a13 13 0 1 1-13-14z" fill="#5c6169"/><circle cx="20" cy="35" r="7"/><path d="M15 41l-3 4M25 41l3 4"/>
          <path d="M17 59h6l-3 3z M17 146h6l-3 3z M17 193h6l-3 3z" fill="#3f444b" stroke="none"/>
          <path d="M13 101q-3-8-8-13 2-3 8 3l-3-12q3-3 5 7V75q3-3 4 0l1 11 3-12q3-2 3 1l-1 12 4-8q4-1 3 2l-4 13-4 7z" fill="#5c6169"/>
          <path d="M6 109l19 19M25 109L6 128M6 115v-6h6M19 109h6v6M6 122v6h6"/><circle cx="26" cy="127" r="6"/><path d="M31 132l5 5" stroke-width="3"/>
          <path d="M17 184v-20h-3l6-8 6 8h-3v20zM10 167q-7 4-1 8 11 4 23 0 6-4-3-8"/><path d="M15 171l-6 5 6 4z" fill="#484e56"/>
          <path d="M6 208h8v8H6zM16 208h8v8h-8zM26 208h8v8h-8zM6 219h20v16H6z" fill="#5c6169"/><path d="M12 223l8 4-8 5z" fill="#484e56"/>
          <circle cx="34" cy="252" r="4"/><path d="M32 252h4"/>
        </svg>
      </div>
      <div class="cmd">
        <div class="cmd-side"><span class="grip"></span><button aria-label="Close command line">${icon("cross")}</button><button aria-label="Customize">${icon("wrench")}</button></div>
        <div class="cmd-main">
          <pre class="cmd-log">${"Command:\n".repeat(6)}Command: _QSAVE</pre>
          <div class="cmd-line">${icon("prompt")}<span class="caret wide"></span>
            <input aria-label="Command" placeholder="Type a command" /><span class="up"></span></div>
        </div>
      </div>
    </div>`;
  }

  private palette() {
    return html`<aside class="palette">
      <h2 class="pal-title"><i></i>LAYER PROPERTIES MANAGER</h2>
      <div class="pal-head">
        <span>Current layer: Tetraedro</span>
        <div class="pal-search"><input class="layer-search" type="text" aria-label="Search for layer" placeholder="Search for layer" />${icon("search", 16)}</div>
      </div>
      <div class="pal-tools">
        ${["folderFilter", "folder"].map((n) => html`<button aria-label=${n}>${icon(n)}</button>`)}<span class="rule"></span>
        ${["states", "newLayer", "newFrozen", "delLayer", "setCurrent"].map((n) => html`<button aria-label=${n}>${icon(n)}</button>`)}
        <button class="push" aria-label="Refresh">${icon("refresh")}</button>
        <button aria-label="Overrides">${icon("overlay")}</button>
        <button aria-label="Settings">${icon("gear")}</button>
      </div>
      <div class="pal-grid">
        <div class="rail"><button aria-label="Expand filters">${icon("chevrons")}</button><button aria-label="Collapse filters">${icon("chevrons")}</button></div>
        <div class="list">
          <div class="grid-box">
            <table>
              <colgroup><col class="c-status" /><col class="c-name" /><col class="c-on" /><col class="c-freeze" /><col /></colgroup>
              <thead><tr><th>Status</th><th><div class="th-in">Name<span class="up"></span></div></th><th class="split">On</th><th>Freeze</th><th>Lock</th></tr></thead>
              <tbody>
                ${this.layers.map((l) => html`
                  <tr class=${classMap({ sel: l.name === this.selected })} @click=${() => (this.selected = l.name)}>
                    <td class="state">${icon(l.current ? "check" : "sheet", 18)}</td>
                    <td class="name">${l.name}</td>
                    <td class="split">${icon("rowBulb", 18)}</td>
                    <td>${icon(l.frozen ? "rowFlake" : "rowSun", 18)}</td>
                    <td class="end">${icon("rowLock")}</td>
                  </tr>`)}
                <tr class="fill"><td></td><td></td><td class="split"></td><td></td><td></td></tr>
              </tbody>
            </table>
          </div>
          <div class="hscroll"><i></i></div>
        </div>
      </div>
      <div class="pal-foot">${icon("folderBolt")}${caret(true)}<span>All: 6 layers displayed of 6 total layers</span></div>
    </aside>`;
  }

  private statusBar() {
    return html`<footer class="status">
      <div class="models">
        <button class="model">Model</button><button class="sheet-tab">a3</button>
        <span class="slash near"></span><button class="sheet-add" aria-label="New layout">${icon("plusBold", 16)}</button><span class="slash near"></span>
      </div>
      <div class="tray">
        <div class="grp"><button class="mdl">MODEL</button></div>
        <div class="grp">${status("grid", "Grid", true)}${status("snap", "Snap")}${statusDrop("Snap options")}</div>
        <div class="grp">${status("dyn", "Dynamic input", true)}${status("ortho", "Ortho", true)}${status("polar", "Polar")}${statusDrop("Polar options")}${status("iso", "Isometric")}${statusDrop("Isometric options")}</div>
        <div class="grp">${status("otrack", "Object snap tracking", true)}${status("osnap", "Object snap", true)}${statusDrop("Object snap options")}</div>
        <div class="grp">${status("annVis", "Annotation visibility", true)}${status("annAuto", "Auto scale")}${status("annScale", "Scale")}<button class="ratio">1:1</button>${statusDrop("Annotation scale")}</div>
        <div class="grp">${status("gear", "Workspace")}${statusDrop("Workspaces")}</div>
        <div class="grp">${status("plus", "Annotation monitor")}</div>
        <div class="grp mid-sb">${status("shapes", "Isolate objects")}</div>
        <div class="grp wide-sb">${status("trusted", "Trusted drawing")}${status("history", "History")}</div>
        <div class="grp mid-sb">${status("fullscreen", "Clean screen")}${status("menu", "Customization")}</div>
      </div>
    </footer>`;
  }

  render() {
    return html`
      ${this.titleBar()}${this.tabs()}${this.ribbon()}
      <nav class="docs">
        <span class="slash"></span>
        <button class="doc start">Start</button>
        <div class="doc open">solidos<button class="doc-x" aria-label="Close solidos">${icon("cross", 16)}</button></div>
        <button class="doc-add" aria-label="New drawing">${icon("plusBold", 16)}</button>
        <span class="slash near"></span>
      </nav>
      <main class="work">${this.leftViews()}${this.mainView()}${this.palette()}</main>
      ${this.statusBar()}`;
  }
}
